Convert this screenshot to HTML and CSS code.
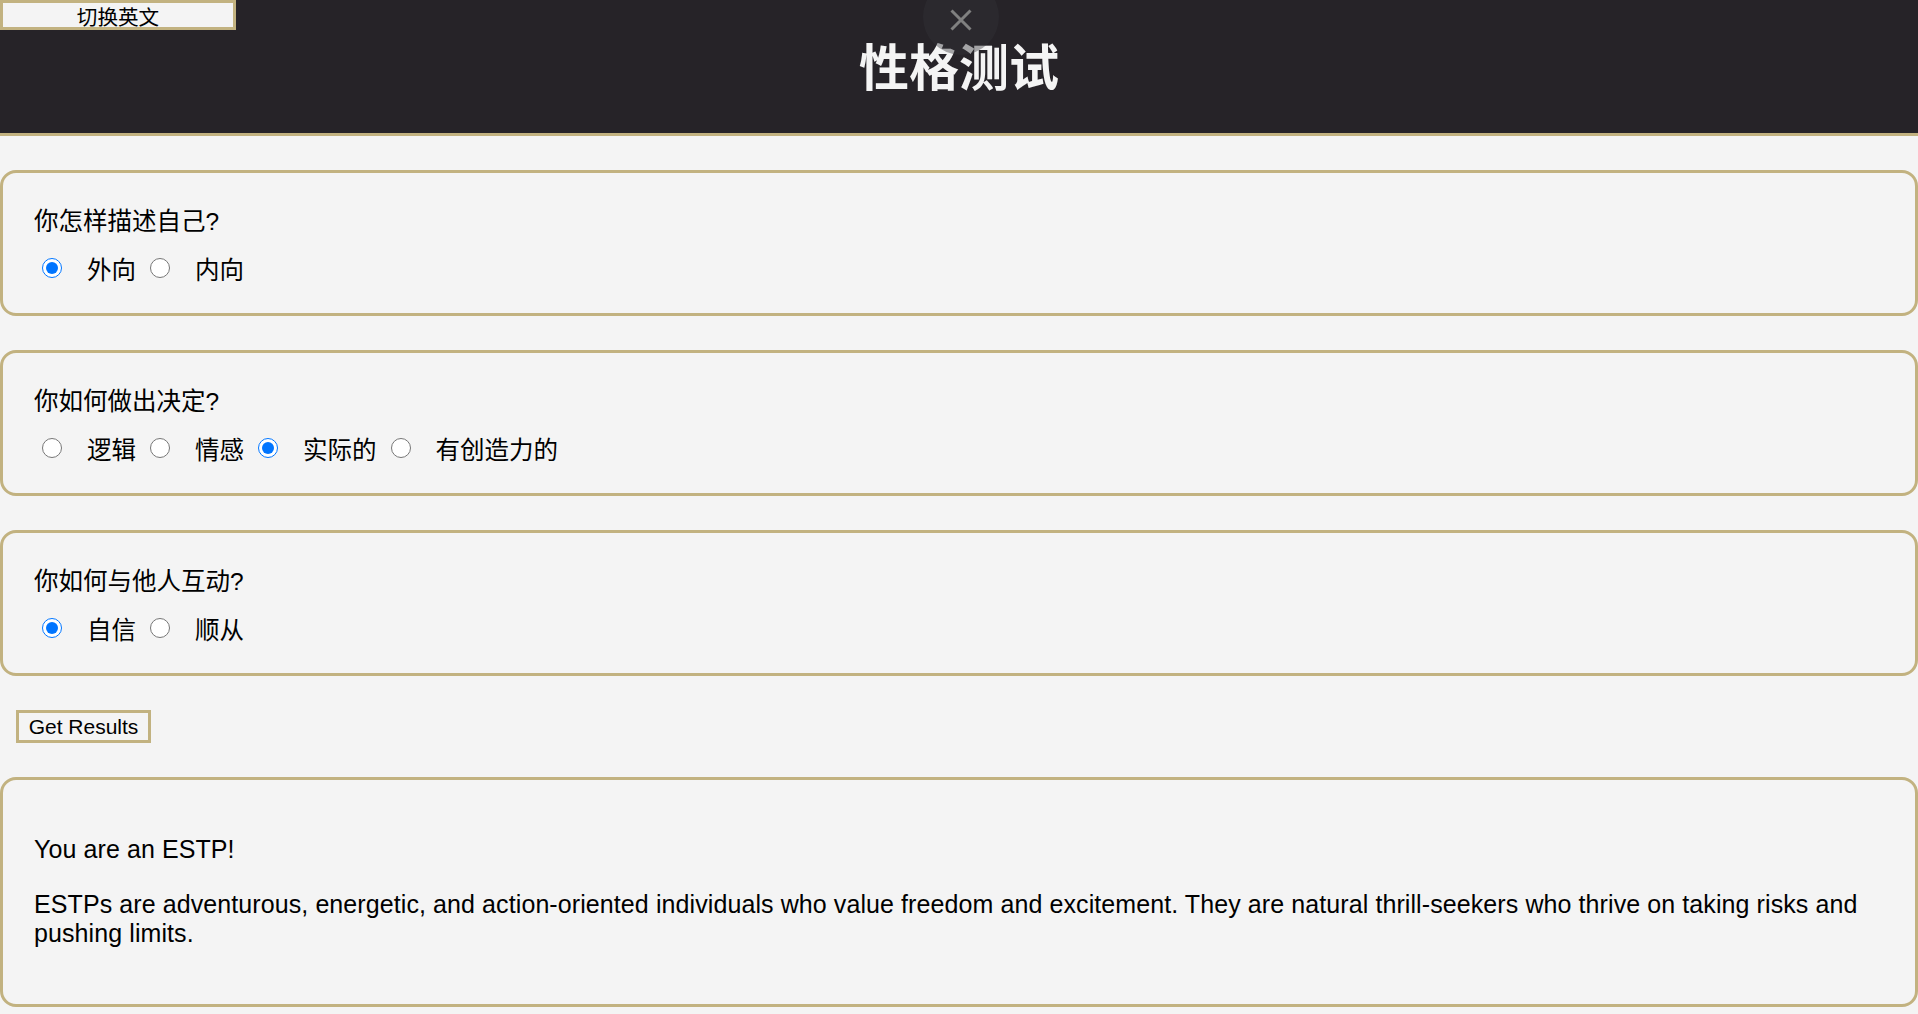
FILE: index.html
```html
<!DOCTYPE html>
<html lang="zh">
<head>
<meta charset="utf-8">
<title>性格测试</title>
<link rel="stylesheet" href="styles.css">
</head>
<body>
<header class="topbar">
  <button class="lang-btn" type="button">切换英文</button>
  <h1 class="title">性格测试</h1>
  <div class="close-badge" aria-label="close">
    <svg width="22" height="22" viewBox="0 0 22 22"><path d="M1.5 1.5 L20.5 20.5 M20.5 1.5 L1.5 20.5" stroke="#808080" stroke-width="3" fill="none"/></svg>
  </div>
</header>
<main class="quiz">
  <section class="card question">
    <p class="q-text">你怎样描述自己?</p>
    <div class="options">
      <input type="radio" name="q1" id="q1a" checked><label for="q1a">外向</label>
      <input type="radio" name="q1" id="q1b"><label for="q1b">内向</label>
    </div>
  </section>
  <section class="card question">
    <p class="q-text">你如何做出决定?</p>
    <div class="options">
      <input type="radio" name="q2" id="q2a"><label for="q2a">逻辑</label>
      <input type="radio" name="q2" id="q2b"><label for="q2b">情感</label>
      <input type="radio" name="q2" id="q2c" checked><label for="q2c">实际的</label>
      <input type="radio" name="q2" id="q2d"><label for="q2d">有创造力的</label>
    </div>
  </section>
  <section class="card question">
    <p class="q-text">你如何与他人互动?</p>
    <div class="options">
      <input type="radio" name="q3" id="q3a" checked><label for="q3a">自信</label>
      <input type="radio" name="q3" id="q3b"><label for="q3b">顺从</label>
    </div>
  </section>
  <button class="submit" type="button">Get Results</button>
  <section class="card result">
    <p>You are an ESTP!</p>
    <p>ESTPs are adventurous, energetic, and action-oriented individuals who value freedom and excitement. They are natural thrill-seekers who thrive on taking risks and pushing limits.</p>
  </section>
</main>
</body>
</html>
```
FILE: styles.css
```css
html, body {
  margin: 0;
  padding: 0;
}
body {
  background: #f4f4f4;
  color: #000;
  font-family: "Liberation Sans", "Noto Sans CJK SC", sans-serif;
  overflow: hidden;
}

.topbar {
  position: relative;
  display: grid;
  height: 127px;
  padding-bottom: 6px;
  background: #262328;
  border-bottom: 3px solid #c2b280;
}
.lang-btn {
  grid-area: 1 / 1;
  align-self: start;
  justify-self: start;
  box-sizing: border-box;
  width: 236px;
  height: 30px;
  margin: 0;
  padding: 1px 0 0;
  border: 3px solid #c2b280;
  background: #f4f4f4;
  color: #000;
  font-family: "Noto Sans CJK SC", sans-serif;
  font-size: 20.6px;
  line-height: 24px;
  text-align: center;
  overflow: visible;
}
.title {
  grid-area: 1 / 1;
  place-self: center;
  margin: 0;
  color: #f4f4f4;
  font-family: "Noto Sans CJK SC", sans-serif;
  font-weight: 700;
  font-size: 50px;
  line-height: 60px;
}
.close-badge {
  position: absolute;
  left: calc(50% - 36px);
  top: -21px;
  width: 76px;
  height: 76px;
  box-sizing: border-box;
  padding-top: 6px;
  border-radius: 50%;
  background: rgba(50, 50, 55, 0.41);
  display: flex;
  align-items: center;
  justify-content: center;
}
.close-badge svg {
  display: block;
}

.quiz {
  display: flex;
  flex-direction: column;
  gap: 34px;
  padding-top: 34px;
}
.card {
  border: 3px solid #c2b280;
  border-radius: 16px;
}
.question {
  padding: 32px 31px 30px;
}
.q-text {
  margin: 0;
  padding-top: 2px;
  font-size: 24.5px;
  line-height: 30px;
}
.options {
  display: flex;
  align-items: center;
  margin-top: 16px;
  height: 30px;
  font-size: 24.5px;
  line-height: 30px;
}
.options input {
  width: 20px;
  height: 20px;
  margin: 0 0 0 14px;
  flex: none;
}
.options input:first-child {
  margin-left: 8px;
}
.options label {
  margin-left: 25px;
  padding-top: 5px;
  white-space: nowrap;
}

.submit {
  align-self: flex-start;
  box-sizing: border-box;
  width: 135px;
  height: 33px;
  margin: 0 0 0 16px;
  padding: 0;
  border: 3px solid #c2b280;
  background: #f4f4f4;
  color: #000;
  font-family: "Liberation Sans", sans-serif;
  font-size: 21px;
  line-height: 27px;
  text-align: center;
}

.result {
  padding: 55px 31px 56px;
  font-size: 25px;
  letter-spacing: 0.09px;
  line-height: 29px;
}
.result p {
  margin: 0;
}
.result p + p {
  margin-top: 26px;
}
```
